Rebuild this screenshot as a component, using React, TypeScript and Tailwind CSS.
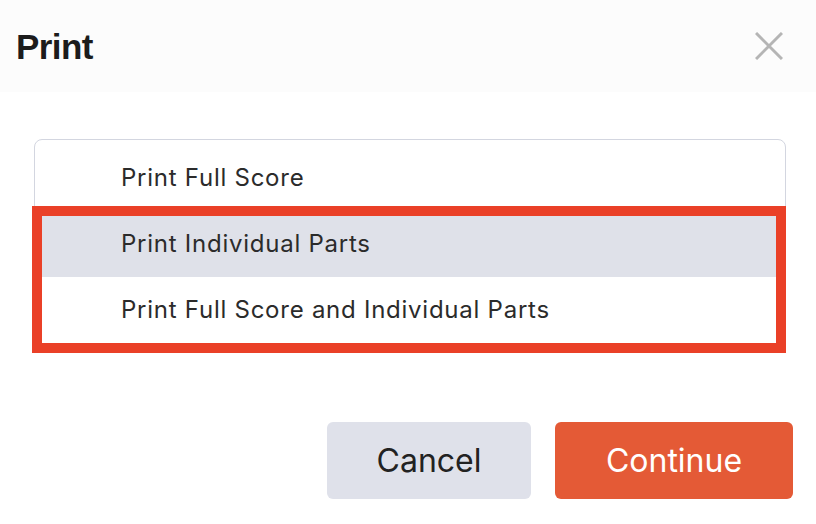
import React, { useState } from 'react';

const options = [
  'Print Full Score',
  'Print Individual Parts',
  'Print Full Score and Individual Parts',
];

export default function App() {
  const [selected, setSelected] = useState(1);

  return (
    <div className="relative w-[816px] h-[524px] bg-white overflow-hidden" style={{ fontFamily: 'Inter, "Noto Sans", sans-serif' }}>
      {/* header */}
      <div className="h-[92px] bg-[#fcfcfc] flex items-center justify-between pl-[16px] pr-[33px]">
        <h1 className="text-[35px] font-bold text-[#1c1c1c] tracking-[-0.6px] leading-none" style={{ fontFamily: '"Liberation Sans", Arial, sans-serif' }}>
          Print
        </h1>
        <button className="w-[28px] h-[28px] flex items-center justify-center">
          <svg width="28" height="28" viewBox="0 0 28 28" fill="none" stroke="#b5b5b5" strokeWidth="3">
            <path d="M1 1 L27 27 M27 1 L1 27" />
          </svg>
        </button>
      </div>

      {/* option list */}
      <div className="ml-[34px] w-[752px] mt-[47px] border-[1.5px] border-[#d3d6e0] rounded-[8px] pt-[5px] pb-[4px] overflow-hidden">
        {options.map((o, i) => (
          <div
            key={o}
            onClick={() => setSelected(i)}
            className={`h-[66px] flex items-center pl-[86px] text-[24px] tracking-[0.75px] text-[#2b2b2b] cursor-pointer ${selected === i ? 'bg-[#dfe1e9]' : ''}`}
          >
            {o}
          </div>
        ))}
      </div>

      {/* annotation box */}
      <div className="absolute left-[32px] top-[206px] w-[754px] h-[147px] border-[10px] border-[#ea4027] pointer-events-none" />

      {/* footer */}
      <div className="flex justify-end gap-[24px] pr-[23px] pt-[74px]">
        <button className="w-[204px] h-[77px] rounded-[6px] bg-[#dfe1ea] text-[32px] text-[#222]">Cancel</button>
        <button className="w-[238px] h-[77px] rounded-[6px] bg-[#e45a36] text-[32px] text-white">Continue</button>
      </div>
    </div>
  );
}
